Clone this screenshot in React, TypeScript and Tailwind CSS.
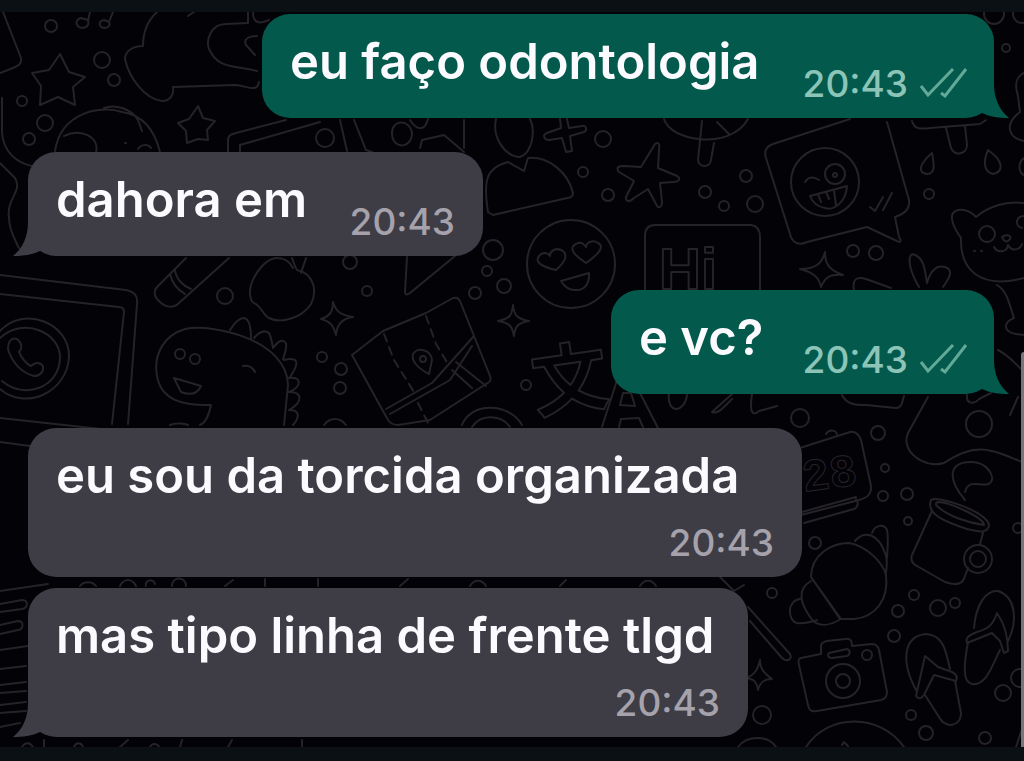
import clsx from 'clsx'

type Message = {
  id: number
  text: string
  time: string
  mine: boolean
  tail: boolean
  stacked?: boolean
  className: string
}

const messages: Message[] = [
  {
    id: 1,
    text: 'eu faço odontologia',
    time: '20:43',
    mine: true,
    tail: true,
    className: 'w-[732px] mt-0.5',
  },
  {
    id: 2,
    text: 'dahora em',
    time: '20:43',
    mine: false,
    tail: true,
    className: 'w-[455px] mt-[34px]',
  },
  {
    id: 3,
    text: 'e vc?',
    time: '20:43',
    mine: true,
    tail: true,
    className: 'w-[383px] mt-[34px]',
  },
  {
    id: 4,
    text: 'eu sou da torcida organizada',
    time: '20:43',
    mine: false,
    tail: false,
    stacked: true,
    className: 'w-[774px] mt-[34px]',
  },
  {
    id: 5,
    text: 'mas tipo linha de frente tlgd',
    time: '20:43',
    mine: false,
    tail: true,
    stacked: true,
    className: 'w-[720px] mt-[11px]',
  },
]

// cx, cy, r
const bubbles = [
  [51, 26, 6], [102, 60, 8], [114, 80, 6], [22, 101, 5], [45, 123, 8],
  [29, 139, 6], [325, 138, 9], [225, 296, 8], [322, 357, 5], [341, 369, 6],
  [340, 388, 6], [603, 139, 8], [583, 172, 5], [608, 195, 6], [493, 250, 10],
  [487, 271, 5], [504, 286, 7], [475, 293, 6], [367, 291, 5], [350, 262, 7],
  [526, 385, 5], [746, 176, 6], [705, 192, 6], [724, 206, 5], [755, 204, 8],
  [929, 194, 5], [994, 14, 10], [1006, 48, 4], [853, 251, 6], [876, 253, 7],
  [1022, 14, 9], [800, 418, 9], [878, 433, 7], [885, 468, 4], [979, 424, 13],
  [883, 496, 5], [907, 494, 6], [908, 521, 4], [815, 543, 6], [772, 593, 5],
  [914, 595, 5], [898, 611, 6], [938, 608, 8], [955, 603, 5], [894, 636, 6],
  [762, 715, 9], [911, 715, 5], [926, 733, 7], [985, 738, 6], [1003, 693, 8],
  [1018, 528, 5], [1020, 678, 9],
]

function Wallpaper() {
  return (
    <svg
      aria-hidden="true"
      viewBox="0 0 1024 761"
      preserveAspectRatio="xMinYMin slice"
      className="absolute inset-0 h-full w-full"
      fill="none"
      stroke="#262328"
      strokeWidth="2"
      strokeLinejoin="round"
      strokeLinecap="round"
    >
      {bubbles.map(([cx, cy, r]) => (
        <circle key={`${cx}-${cy}`} cx={cx} cy={cy} r={r} />
      ))}

      {/* stars, music notes */}
      <path d="M60 54l9 18 16 5-12 10 2 18-17-8-18 8 1-19-9-13 17-3z" />
      <path d="M198 106l5 12 12 3-8 9 1 10-10-1-11 4-1-12-8-8 11-4z" />
      <path d="M90 12l-2 9a6 5 0 1 1-7-3l7 2M113 12l-4 10a5 4 0 1 1-5-2l5 2" />
      <path d="M655 144c4-3 5 1 4 6l-1 18 19 8c5 3 1 6-4 6l-13 1 2 19c0 6-4 7-6 2l-8-15-14 9c-6 6-10 2-7-3l7-14-15-9c-4-5 0-6 5-6l17 1z" />
      <path d="M513 305c1 10 4 14 16 16-11 2-14 5-15 15-2-10-4-13-16-15 12-2 14-6 15-16zM333 302c3 10 8 13 20 15-12 2-16 8-17 18-3-10-5-13-15-16 9-3 12-7 12-17zM825 252c0 12 4 18 18 23-13-1-18 2-22 12-2-9-6-14-21-18 15 0 22-5 25-17zM760 660c0 9 4 13 12 19-8 0-12 3-14 11-1-8-4-11-12-12 9-3 12-9 14-18z" />

      {/* paper, fox, hand on the top left */}
      <path d="M3 12l18 46c1 6-3 8-8 10L0 73M2 98v34c1 20 15 31 30 34M0 163l15 15c8 14-9 20-6 40 0 12 6 22 10 30" />
      <path d="M157 12c-10 9-14 22-14 34-10 0-18 5-18 13 4 19 20 40 37 42 9 0 12-7 11-14l62-2c13 1 22 8 24-3M248 12v11l-22 1c-16 0-20 17-17 25 9 20 24 16 48 22M253 12c0 12 7 12 16 8M188 16l6-4" />
      <path d="M257 36c-8 0-14 3-11 9l9 10" />
      <path d="M55 151c6-40 48-46 67-39 22 3 33 20 38 40M64 136c16-8 36 0 32 17M138 149c3-5 10-5 13-1M104 108c10-4 27 0 34 12l4 11M125 143h1" />
      <path d="M228 152v-12c0-5 4-6 8-7l50-13M240 152v-7l80-23M340 120l7 31M354 120l12 30 6 2" />
      <path d="M392 133c0-14 18-14 20 0 0 16-20 17-20 0M410 120c5 8 14 14 18-1M420 148l2-8 22-5 20 17M464 120v28" />

      {/* person, plus sign */}
      <path d="M496 119c-4 18 8 37 24 38 12-4 16-26 10-38M488 212c-5-32-2-44 20-50l16 9 4-13c20-2 40 14 45 35 0 5-5 5-10 6l-70 16z" />
      <path d="M560 119l1 9-14 5c-5 2-3 7 2 7l13-2 4 14 6-1-2-15 14-4c4-2 2-7-2-6l-13 2-2-9" />
      <path d="M664 119c6 22 66 32 84 0M702 121l-4 39c1 8 12 8 13 0l3-17M717 122l12 12" />

      {/* chat card with winking face */}
      <path d="M850 119l-77 25c-8 3-9 8-7 14l24 76c2 9 9 12 17 8l60-15 30 14c5 3 4-1 2-4l-4-20c10-3 15-9 14-17l-22-78" />
      <circle cx="825" cy="182" r="34" />
      <circle cx="835" cy="174" r="10" />
      <circle cx="835" cy="175" r="2" />
      <path d="M805 182c3-5 8-6 14-2M810 196l37-10c-1 16-13 25-22 22-6-1-12-4-15-12zM818 194l3 8M826 192l3 7M834 191l2 14M870 207l5 4 8-14M883 210l9-17" />
      <path d="M912 121c2 9 10 8 18 7l50-4 6-4M946 128l5 20c4 9 16 6 16-3l-2-19M932 153c-14 12-14 20-5 21 9 0 7-10 5-21zM988 150c-6 14-3 22 5 24 10-2 12-12-5-24z" />
      <path d="M1024 73c-9 4-9 14-6 23l2 16c-16 12-12 26 4 29M1024 158c-6 4-6 14 0 17" />
      {/* bear */}
      <path d="M1024 203c-15-2-34 2-48 14-10-11-26-9-24 2 1 9 6 14 9 19-1 30 17 52 63 40M997 285c10 6 12 18 17 33-12 5-10 14 2 16l8 1" />
      <circle cx="987" cy="234" r="8" />
      <path d="M1002 237c4-3 10-2 8 2-3 4-6 3-8-2zM994 247c3 6 13 6 14-2 4 7 12 5 14-1M1024 216c-8 0-10 10-2 12M974 251h1M981 251h1" />

      {/* heart-eyes face */}
      <circle cx="571" cy="264" r="44" />
      <path d="M556 270c-14-3-22-8-17-14 4-5 9-3 11 0 0-6 7-9 13-5 6 5 0 13-7 19zM586 263c-12-8-18-15-10-19 5-3 8 0 10 3 1-6 8-7 12-4 8 4-2 13-12 20zM561 281l28-8c1 12-6 18-14 17-6 0-11-4-14-9z" />

      {/* Hi card */}
      <path d="M645 290v-54c0-8 4-11 10-11h96c7 1 9 6 9 12v53" />
      <text
        x="659"
        y="289"
        fontSize="58"
        strokeWidth="2"
        className="font-['Liberation_Sans',sans-serif] font-bold"
      >
        Hi
      </text>
      <path d="M854 290c-2-10 2-14 12-11l25 9M919 287c-14-24-10-36-4-32 10 4 10 18 12 28 4-14 10-18 18-16 10 3 3 13-2 20" />

      {/* tablet with phone logo */}
      <path d="M0 275l126 15c9 2 12 6 11 14l-9 120M0 294l119 13c4 0 5 2 5 5l-12 112M0 418l110 12M0 442l30 4" />
      <path d="M0 331c24-26 70-8 69 26-2 36-44 54-69 32M0 338c24-22 60-5 60 19 0 31-36 43-58 24" />
      <path d="M17 339c-7-2-9 4-9 10 4 14 14 24 26 27 6 0 10-4 9-10-3-4-8-4-12 0-4-2-9-7-12-14 3-3 4-8-2-13z" />
      {/* bottle, apple */}
      <path d="M186 258l-28 28c-6 6-3 12 2 16 6 6 14 6 19 1l50-45M175 270c1 9 8 16 16 19M170 274c2 9 8 16 15 20" />
      <path d="M292 258c2 4 2 8 5 12 18 4 20 22 14 34-9 14-30 20-42 14-6-3-7-10-13-14-6-1-8-12-4-22 5-12 15-24 25-24 7 0 13 4 16 10M306 258l-5 15" />
      {/* dinosaur */}
      <path d="M284 425l4-40c-1-45-75-62-103-56-20 6-32 24-28 47 4 24 26 30 54 29-2 10-6 18-11 20M230 330c5-8 10-12 14-12 6 1 7 13 7 21M254 338c6-7 11-8 15-5 2 4 3 9 4 15M273 348c6-8 10-9 13-5 1 6-1 10-3 16M284 360c13-3 17 1 6 17M289 378c12-2 14 8 0 14M289 392c14 0 14 10 0 18M289 410c12 0 10 8 4 15M243 366c6-1 10 2 12 6M174 378l27 8c-4 9-12 9-20 6zM170 425c6-3 16-1 18 0" />
      <circle cx="180" cy="354" r="5" />
      <circle cx="195" cy="359" r="5" />
      <path d="M324 425c6-8 16-8 22 0" />

      {/* map and paper plane */}
      <path d="M407 257l-2 35c0 3 2 3 5 1l45-37" />
      <path d="M352 355l31-24 43-18 27-15c4-1 5 0 7 3l30 75c2 4 0 6-4 8l-56 36-32 5c-6 0-8-2-10-5zM386 409l46-26 42-47M390 414l60-34 22-34M456 362l30 24M452 370l20 18" />
      <path d="M384 334l10 26 20 32M426 316l10 28 12 20M418 403l10 20" strokeDasharray="8 6" />
      <path d="M429 374c-12-6-18-14-16-20 4-8 18-4 19 6z" />
      <circle cx="423" cy="359" r="3" />
      <path d="M462 425c9-24 48-22 60 0M472 427c9-14 30-12 38 0" />

      {/* translate glyphs */}
      <text
        x="536"
        y="412"
        fontSize="76"
        strokeWidth="2"
        transform="rotate(-8 536 412)"
        className="font-['Noto_Sans_CJK_JP',sans-serif] font-bold"
      >
        文
      </text>
      <path d="M602 427l16-50M640 393l18 35M620 405l3-12h8l4 13zM619 427l2-8 18-1 4 9M669 393c-3 20 15 22 18 2M712 412l20-18M712 412c4 2 8-1 12-5l8-8M752 394c-3 20 1 22 7 17l18-5M842 395c5 10 14 10 24 10l30 3c6 0 6-6 8-12" />

      {/* calendar */}
      <path d="M800 448l50-16c6-1 9 3 11 8l10 46c1 9-5 12-12 14l-58 15M802 512l54-15M804 523l50-14c4-2 5-6 2-10M826 434c3-5 10-4 11 0" />
      <text
        x="804"
        y="492"
        fontSize="46"
        strokeWidth="1"
        transform="rotate(-8 804 492)"
        className="font-['Liberation_Mono',monospace] font-bold"
      >
        28
      </text>
      <path d="M928 397l-20 36c-8 18 16 36 36 30 30-20 44-16 80 0M967 395c-1 10 8 9 12 4l12-6M998 350c8 4 14 10 24 20M1010 415l8-18M965 500c-20-24-14-38 6-38 16 0 24 14 20 20-6 8-22-6-26 10" />

      {/* mug */}
      <path d="M931 500c5-5 52 10 58 24 0 10-10 8-22 5-18-6-42-14-36-29zM936 505c12 12 34 18 48 20 0-7-32-22-45-23-3 0-3 1-3 3zM932 511l-20 44c-2 6 1 9 5 11l28 16c12 4 18 2 20-6l3-8M983 533l-3 11" />
      <circle cx="978" cy="559" r="14" />
      <circle cx="978" cy="559" r="8" />
      {/* croissant */}
      <path d="M811 577c0-22 20-34 38-34 18 3 34 20 37 32 3 24-10 42-32 44h-14zM811 577l30 42M855 541c10-12 24-6 30 12 3 6 2 13 1 20M872 533c3-8 12-10 15-3 2 10 0 22 0 28M811 581c-14 8-12 22 2 40 8 6 18 4 26-1M800 599c-14 2-12 22-3 24 8 1 14-1 20-3" />
      {/* camera */}
      <path d="M801 658l20-4v-8c0-4 3-4 6-5l18-2c6-1 7 2 7 7l20-2c4 0 6 2 7 6l8 42c0 5-2 7-6 8l-64 11c-6 1-8-1-9-6l-9-40c-1-4-1-6 2-7zM829 653l18-4c4 1 3 6 0 7l-15 2c-4 0-5-3-3-5z" />
      <circle cx="843" cy="681" r="17" />
      <circle cx="843" cy="681" r="7" />
      <circle cx="867" cy="655" r="5" />
      {/* flip-flops */}
      <path d="M916 690c-16-30-12-54 10-56 18 1 20 18 24 35M925 656l-9 40c3 4 6 2 8-1l10-20 22 6c2-4 0-7-4-9l-14-5zM925 695l14 22c6 12 22 10 22-4l-6-32" />
      <path d="M974 628c2-24 12-38 24-37 18 6 20 30 10 50M997 613c-4 12-9 16-20 19-8 3-12 6-10 11l25-10 8 8 4 12 4-2c0-14-4-28-11-38zM968 642c-4 22-6 40 4 42 14 2 20-18 28-34" />
      {/* brush, clock */}
      <path d="M720 577l14 14 10-6M748 607l42 47c3 6-4 8-8 4l-32-37M806 747c22-34 74-34 98 0M842 745l2-3 4 4M738 747c9-12 30-12 38 0M1016 747l8-24" />
      {/* book pages */}
      <path d="M0 591l48-7M0 604l22-4c7 0 6 8 0 9l-22 3M0 625l18-4c6 0 6 8 0 9l-18 4M0 650l28-4M0 669l26-3M0 685l26-3M0 693l26-2M0 705l26-3M0 713l26-2M0 727l20-4" />
      <path d="M80 586c4-5 12-5 16 0M120 586c4-8 12-8 16 0M146 586c-2-6 8-8 9-2M172 586c0-10 14-10 14 0M225 586l8-6M265 586v-7M318 586v-7M22 747c3-5 8-5 11 0M44 747v-7M74 747c2-5 7-5 9 0M120 747l8-7M150 747c2-4 7-4 9 0M180 747l2-7M228 747l4-7M302 747v-7M400 586l8-7M470 586c4-7 12-7 16 0M560 586l6-6M640 586c4-7 12-7 16 0" />
    </svg>
  )
}

function Checks() {
  return (
    <svg
      role="img"
      aria-label="Entregue"
      viewBox="0 0 48 32"
      className="mb-1 ml-3 h-8 w-12 shrink-0"
      fill="none"
      stroke="#63a998"
      strokeWidth="3"
    >
      <path d="M1 18l7 9L33 1M21 25l4 3L46 1" />
    </svg>
  )
}

function Tail({ mine }: { mine: boolean }) {
  return (
    <svg
      aria-hidden="true"
      viewBox="0 0 32 40"
      className={clsx(
        'absolute bottom-0 h-10 w-8',
        mine ? '-right-4 text-[#035a4c]' : '-left-4 -scale-x-100 text-[#3e3c44]',
      )}
      fill="currentColor"
    >
      <path d="M0 0h16v6c0 14 5 26 15 34-10 0-19-1-27-5L0 30z" />
    </svg>
  )
}

function MessageBubble({ message }: { message: Message }) {
  const { text, time, mine, tail, stacked, className } = message

  return (
    <li
      className={clsx(
        'relative flex max-w-full rounded-[28px] pt-5 pb-3.5 pl-7',
        mine ? 'self-end bg-[#035a4c] pr-[26px]' : 'self-start bg-[#3e3c44] pr-7',
        stacked ? 'flex-col gap-[19px]' : 'items-end justify-between',
        className,
      )}
    >
      {tail && <Tail mine={mine} />}
      <p
        className={clsx(
          'relative text-[49px] leading-[56px] font-semibold whitespace-nowrap text-[#fbfaff]',
          !stacked && 'mb-3.5',
        )}
      >
        {text}
      </p>
      <div className="relative flex items-end self-end">
        <time
          className={clsx(
            'text-[37px] leading-10 font-medium',
            mine ? 'text-[#8cc5b8]' : 'text-[#a5a2ac]',
          )}
        >
          {time}
        </time>
        {mine && <Checks />}
      </div>
    </li>
  )
}

export default function App() {
  return (
    <div className="flex min-h-screen flex-col bg-[#0a1013] font-[Inter,sans-serif]">
      <main className="relative mt-3 mb-3.5 flex-1 overflow-hidden bg-[#030207]">
        <div className="absolute inset-x-0 -top-3 -bottom-3.5">
          <Wallpaper />
        </div>
        <ul className="relative flex flex-col pr-[30px] pb-2.5 pl-7">
          {messages.map((message) => (
            <MessageBubble key={message.id} message={message} />
          ))}
        </ul>
        <div className="absolute top-[340px] right-0 bottom-0 w-[3px] rounded-tl-sm bg-[#77777b]" />
      </main>
    </div>
  )
}
